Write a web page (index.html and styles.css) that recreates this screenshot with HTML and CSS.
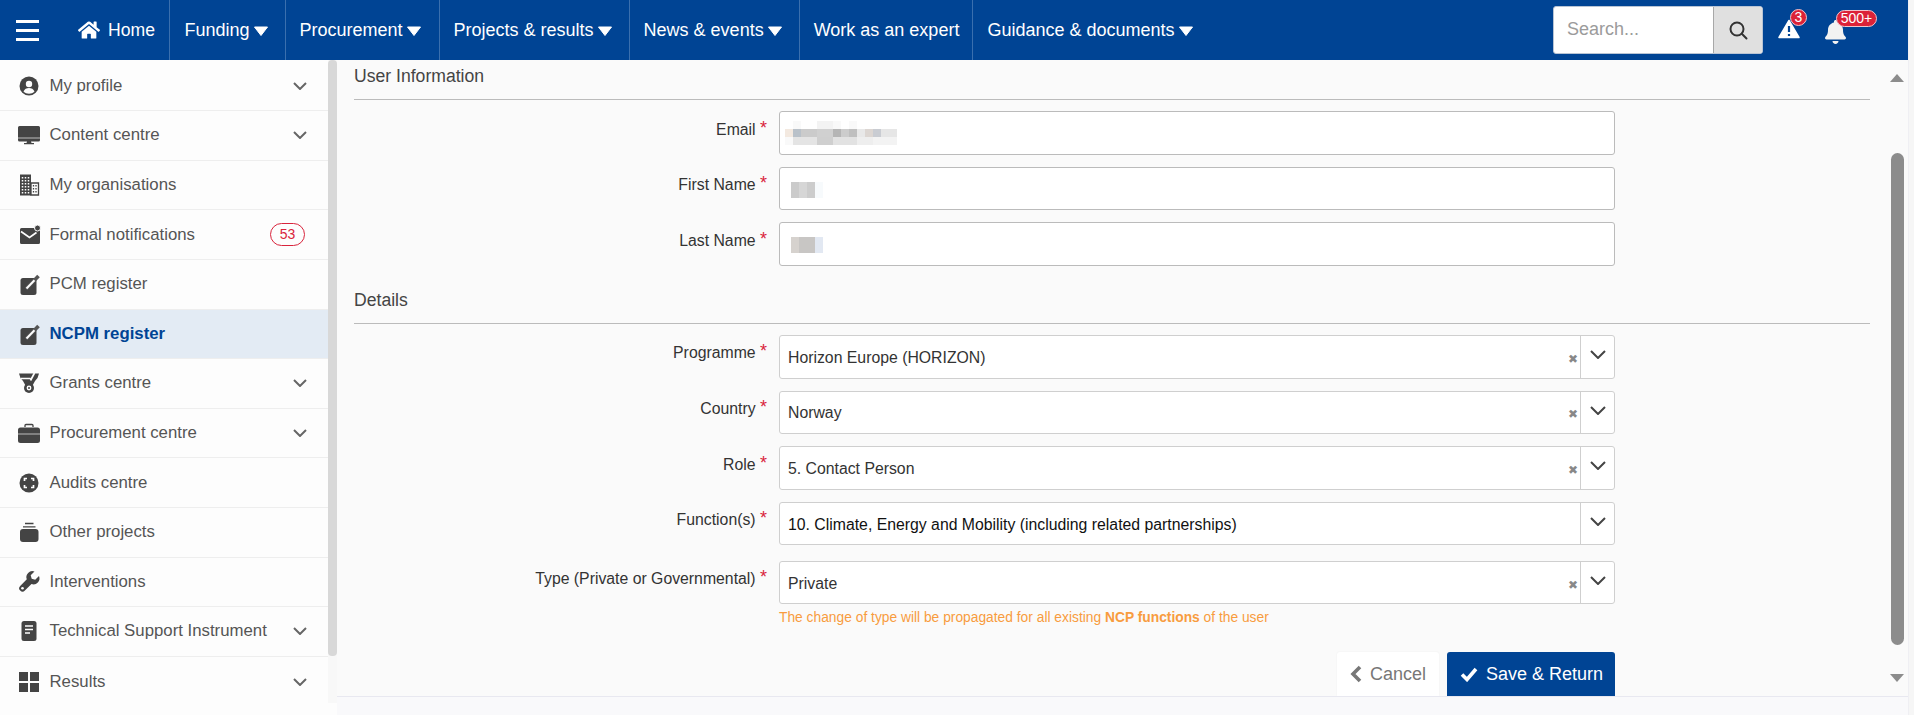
FILE: index.html
```html
<!DOCTYPE html>
<html lang="en">
<head>
<meta charset="utf-8">
<title>NCPM register</title>
<link rel="stylesheet" href="styles.css">
</head>
<body>
<div class="app">
  <header class="topbar">
    <button class="burger" aria-label="Menu"><span></span><span></span><span></span></button>
    <nav class="topnav">
      <a class="nav-item nav-home"><svg class="home-ico" viewBox="0 0 576 512"><path d="M280.37 148.26L96 300.11V464a16 16 0 0 0 16 16l112.06-.29a16 16 0 0 0 15.92-16V368a16 16 0 0 1 16-16h64a16 16 0 0 1 16 16v95.64a16 16 0 0 0 16 16.05L464 480a16 16 0 0 0 16-16V300L295.67 148.26a12.19 12.19 0 0 0-15.3 0zM571.6 251.47L488 182.56V44.05a12 12 0 0 0-12-12h-56a12 12 0 0 0-12 12v72.61L318.47 43a48 48 0 0 0-61 0L4.34 251.47a12 12 0 0 0-1.6 16.9l25.5 31A12 12 0 0 0 45.15 301l235.22-193.74a12.19 12.19 0 0 1 15.3 0L530.9 301a12 12 0 0 0 16.9-1.6l25.5-31a12 12 0 0 0-1.7-16.93z"/></svg>Home</a>
      <a class="nav-item">Funding<svg class="caret" viewBox="0 0 14 10"><path d="M.5 1h13L7 9.500z"/></svg></a>
      <a class="nav-item nav-wide">Procurement<svg class="caret" viewBox="0 0 14 10"><path d="M.5 1h13L7 9.500z"/></svg></a>
      <a class="nav-item">Projects &amp; results<svg class="caret" viewBox="0 0 14 10"><path d="M.5 1h13L7 9.500z"/></svg></a>
      <a class="nav-item">News &amp; events<svg class="caret" viewBox="0 0 14 10"><path d="M.5 1h13L7 9.500z"/></svg></a>
      <a class="nav-item nav-plain">Work as an expert</a>
      <a class="nav-item">Guidance &amp; documents<svg class="caret" viewBox="0 0 14 10"><path d="M.5 1h13L7 9.500z"/></svg></a>
    </nav>
    <div class="search">
      <span class="search-input">Search...</span>
      <span class="search-btn"><svg viewBox="0 0 20 20" class="search-ico"><circle cx="9" cy="9" r="6.500"/><path d="M13.800 13.800l4.700 4.700"/></svg></span>
    </div>
    <div class="alerts">
      <span class="alert-ico"><svg viewBox="0 0 22 20" class="warn"><path class="warn-bg" d="M11 1.500L21 18.500H1z"/><path class="warn-mark" d="M11 7v6M11 15v2"/></svg><b class="badge badge-round">3</b></span>
      <span class="bell-ico"><svg viewBox="0 0 448 512" class="bell"><path d="M224 512c35.32 0 63.97-28.65 63.97-64H160.03c0 35.35 28.65 64 63.97 64zm215.39-149.71c-19.32-20.76-55.47-51.99-55.47-154.29 0-77.7-54.48-139.9-127.94-155.16V32c0-17.67-14.32-32-31.98-32s-31.98 14.33-31.98 32v20.84C118.56 68.1 64.08 130.3 64.08 208c0 102.3-36.15 133.53-55.47 154.29-6 6.45-8.66 14.16-8.61 21.71.11 16.4 12.98 32 32.1 32h383.8c19.12 0 32-15.6 32.1-32 .05-7.55-2.61-15.27-8.61-21.71z"/></svg><b class="badge badge-pill">500+</b></span>
    </div>
  </header>
  <div class="body-row">
    <aside class="sidebar">
      <ul class="menu">
        <li class="menu-row"><svg class="ico" viewBox="0 0 24 24"><circle cx="12" cy="12" r="9.500"/><circle class="cut" cx="12" cy="10" r="3.200"/><path class="cut" d="M6.500 17.500c1-2.500 3-3.500 5.500-3.500s4.500 1 5.500 3.500c-1.500 1.500-3.300 2.200-5.500 2.200s-4-.7-5.500-2.200z"/></svg><span class="menu-text">My profile</span><svg class="chev" viewBox="0 0 14 8"><path d="M1 1l6 6 6-6"/></svg></li>
        <li class="menu-row"><svg class="ico" viewBox="0 0 24 24"><path d="M2.500 3h19A1.500 1.500 0 0 1 23 4.500V17a1.500 1.500 0 0 1-1.500 1.500h-19A1.500 1.500 0 0 1 1 17V4.500A1.500 1.500 0 0 1 2.500 3zM10 18.500h4l.5 1.500H17v1.200H7V20h2.500z"/><path class="cut-line" d="M1 15h22"/></svg><span class="menu-text">Content centre</span><svg class="chev" viewBox="0 0 14 8"><path d="M1 1l6 6 6-6"/></svg></li>
        <li class="menu-row"><svg class="ico" viewBox="0 0 24 24"><path d="M3 1.500h11v21H3z"/><path class="cut-dots" d="M5.500 4v17M8.500 4v17M11.500 4v17"/><path class="thin" d="M14 10h7.500v12H14z"/><path class="thin-dots" d="M16.500 12v9M19 12v9"/></svg><span class="menu-text">My organisations</span></li>
        <li class="menu-row"><svg class="ico" viewBox="0 0 24 24"><path d="M4.500 5h17A1.500 1.500 0 0 1 23 6.500V19.500A1.500 1.500 0 0 1 21.500 21H4.500A1.500 1.500 0 0 1 3 19.500V6.500A1.500 1.500 0 0 1 4.500 5z"/><path class="cut-stroke" d="M4 8.500l8.500 6 7-5"/><circle class="ring" cx="20.500" cy="5" r="3"/></svg><span class="menu-text">Formal notifications</span><span class="count">53</span></li>
        <li class="menu-row"><svg class="ico" viewBox="0 0 24 24"><rect x="3.500" y="6" width="16" height="17" rx="2.500"/><path class="pen-out" d="M9 17L21.500 4"/><path class="pen-in" d="M9.500 16.500l8-8.300"/></svg><span class="menu-text">PCM register</span></li>
        <li class="menu-row menu-row-active"><svg class="ico" viewBox="0 0 24 24"><rect x="3.500" y="6" width="16" height="17" rx="2.500"/><path class="pen-out" d="M9 17L21.500 4"/><path class="pen-in" d="M9.500 16.500l8-8.300"/></svg><span class="menu-text">NCPM register</span></li>
        <li class="menu-row"><svg class="ico" viewBox="0 0 24 24"><path d="M2 2.500h20l-1.500 4.500-2.500 3-3 5.500a5 5 0 0 1-6 0L6 10 3.500 7z"/><circle cx="12" cy="17" r="5"/><circle class="cut" cx="12" cy="17" r="2.400"/><circle cx="12" cy="17" r="1"/><path class="cut-stroke" d="M4 7.500h9.500M13.500 9.500L17.500 2"/></svg><span class="menu-text">Grants centre</span><svg class="chev" viewBox="0 0 14 8"><path d="M1 1l6 6 6-6"/></svg></li>
        <li class="menu-row"><svg class="ico" viewBox="0 0 24 24"><path d="M3.500 6.500h17A2.500 2.500 0 0 1 23 9v10.500a2.500 2.500 0 0 1-2.500 2.500h-17A2.500 2.500 0 0 1 1 19.500V9a2.500 2.500 0 0 1 2.500-2.500z"/><path class="thin" d="M8 6V4.500a1 1 0 0 1 1-1h6a1 1 0 0 1 1 1V6"/><path class="cut-line" d="M1 13h22"/></svg><span class="menu-text">Procurement centre</span><svg class="chev" viewBox="0 0 14 8"><path d="M1 1l6 6 6-6"/></svg></li>
        <li class="menu-row"><svg class="ico" viewBox="0 0 24 24"><circle cx="12" cy="12" r="9.500"/><path class="cut-stroke" d="M7.500 10V7.500H10M14 7.500h2.500V10M16.500 14v2.500H14M10 16.500H7.500V14"/></svg><span class="menu-text">Audits centre</span></li>
        <li class="menu-row"><svg class="ico" viewBox="0 0 24 24"><path d="M6 9h12.500a3 3 0 0 1 3 3v7a3 3 0 0 1-3 3H6a3 3 0 0 1-3-3v-7a3 3 0 0 1 3-3z"/><path class="thin" d="M6 6.800h12.500M8 3.500h8.500"/></svg><span class="menu-text">Other projects</span></li>
        <li class="menu-row"><svg class="ico" viewBox="0 0 24 24"><path d="M22 6l-3.800 3.800-3.500-1-1-3.500L17.500 1.500A6 6 0 0 0 9.800 9.300L3.200 15.900a3.300 3.300 0 1 0 4.700 4.700l6.600-6.600A6 6 0 0 0 22 6z"/><circle class="cut" cx="5.500" cy="18.300" r="1.300"/></svg><span class="menu-text">Interventions</span></li>
        <li class="menu-row"><svg class="ico" viewBox="0 0 24 24"><rect x="4.500" y="2" width="15" height="20" rx="2.500"/><path class="cut-stroke" d="M8 7h8M8 10.500h8M8 14h5"/></svg><span class="menu-text">Technical Support Instrument</span><svg class="chev" viewBox="0 0 14 8"><path d="M1 1l6 6 6-6"/></svg></li>
        <li class="menu-row"><svg class="ico" viewBox="0 0 24 24"><path d="M2 2h9v9H2zM13 2h9v9h-9zM2 13h9v9H2zM13 13h9v9h-9z"/></svg><span class="menu-text">Results</span><svg class="chev" viewBox="0 0 14 8"><path d="M1 1l6 6 6-6"/></svg></li>
      </ul>
      <div class="side-scroll"><div class="side-thumb"></div></div>
    </aside>
    <main class="main">
      <div class="main-row">
        <div class="content">
          <h2 class="section-head">User Information</h2>
          <div class="form-row">
            <label class="field-label">Email <i>*</i></label>
            <div class="field field-input"><svg class="mosaic mosaic-email" viewBox="0 0 112 24"><g fill="#f3f3f3"><rect x="8" width="8" height="8" fill="#f9f9f9"/><rect x="32" width="16" height="8"/><rect x="48" width="8" height="8" fill="#f9f9f9"/><rect x="64" width="8" height="8" fill="#f9f9f9"/></g><rect y="8" width="8" height="8" fill="#f3e9e0"/><rect x="8" y="8" width="8" height="8" fill="#b9c1c9"/><rect x="16" y="8" width="16" height="8" fill="#cbcbcb"/><rect x="32" y="8" width="16" height="8" fill="#d0d0d0"/><rect x="48" y="8" width="8" height="8" fill="#b5b5b5"/><rect x="56" y="8" width="8" height="8" fill="#cccccc"/><rect x="64" y="8" width="8" height="8" fill="#bfbfbf"/><rect x="72" y="8" width="8" height="8" fill="#e8e8e8"/><rect x="80" y="8" width="8" height="8" fill="#dcd6d2"/><rect x="88" y="8" width="8" height="8" fill="#c9ccd2"/><rect x="96" y="8" width="16" height="8" fill="#e6e6e6"/><rect y="16" width="8" height="8" fill="#f9f9f9"/><rect x="8" y="16" width="24" height="8" fill="#e4e4e4"/><rect x="32" y="16" width="16" height="8" fill="#cfcfcf"/><rect x="48" y="16" width="24" height="8" fill="#e2e2e2"/><rect x="72" y="16" width="16" height="8" fill="#eeeeee"/><rect x="88" y="16" width="24" height="8" fill="#f3f3f3"/></svg></div>
          </div>
          <div class="form-row">
            <label class="field-label">First Name <i>*</i></label>
            <div class="field field-input"><svg class="mosaic mosaic-name" viewBox="0 0 32 16"><rect width="8" height="16" fill="#cbcbcb"/><rect x="8" width="8" height="16" fill="#d6d6d6"/><rect x="16" width="8" height="16" fill="#cccccc"/><rect x="24" width="8" height="16" fill="#f7fafc"/></svg></div>
          </div>
          <div class="form-row">
            <label class="field-label">Last Name <i>*</i></label>
            <div class="field field-input"><svg class="mosaic mosaic-name" viewBox="0 0 32 16"><rect width="8" height="16" fill="#d6d2ce"/><rect x="8" width="16" height="16" fill="#c8c6c4"/><rect x="24" width="8" height="16" fill="#e2e8f2"/></svg></div>
          </div>
          <h2 class="section-head section-second">Details</h2>
          <div class="form-row">
            <label class="field-label">Programme <i>*</i></label>
            <div class="field field-select"><span class="value">Horizon Europe (HORIZON)</span><span class="clear">✖</span><span class="drop"><svg class="drop-chev" viewBox="0 0 16 9"><path d="M1 1l7 7 7-7"/></svg></span></div>
          </div>
          <div class="form-row">
            <label class="field-label">Country <i>*</i></label>
            <div class="field field-select"><span class="value">Norway</span><span class="clear">✖</span><span class="drop"><svg class="drop-chev" viewBox="0 0 16 9"><path d="M1 1l7 7 7-7"/></svg></span></div>
          </div>
          <div class="form-row">
            <label class="field-label">Role <i>*</i></label>
            <div class="field field-select"><span class="value">5. Contact Person</span><span class="clear">✖</span><span class="drop"><svg class="drop-chev" viewBox="0 0 16 9"><path d="M1 1l7 7 7-7"/></svg></span></div>
          </div>
          <div class="form-row">
            <label class="field-label">Function(s) <i>*</i></label>
            <div class="field field-select"><span class="value value-dark">10. Climate, Energy and Mobility (including related partnerships)</span><span class="drop"><svg class="drop-chev" viewBox="0 0 16 9"><path d="M1 1l7 7 7-7"/></svg></span></div>
          </div>
          <div class="form-row form-row-type">
            <label class="field-label">Type (Private or Governmental) <i>*</i></label>
            <div>
              <div class="field field-select"><span class="value">Private</span><span class="clear">✖</span><span class="drop"><svg class="drop-chev" viewBox="0 0 16 9"><path d="M1 1l7 7 7-7"/></svg></span></div>
              <p class="help">The change of type will be propagated for all existing <b>NCP functions</b> of the user</p>
            </div>
          </div>
          <div class="actions">
            <button class="btn btn-cancel"><svg class="btn-ico" viewBox="0 0 12 18"><path d="M10 2L3 9l7 7"/></svg>Cancel</button>
            <button class="btn btn-save"><svg class="btn-ico" viewBox="0 0 18 16"><path d="M2 8.500l5 5L16 3"/></svg>Save &amp; Return</button>
          </div>
        </div>
        <div class="main-scroll">
          <span class="arrow-up"></span>
          <span class="main-thumb"></span>
          <span class="arrow-down"></span>
        </div>
      </div>
      <div class="main-foot"></div>
    </main>
  </div>
</div>
<div class="edge"></div>
</body>
</html>
```
FILE: styles.css
```css
* { box-sizing: border-box; }
html, body { margin: 0; height: 715px; overflow: hidden; }
body {
  display: flex;
  background: #fdfdfd;
  font-family: "Liberation Sans", Arial, sans-serif;
  color: #333;
}
.app { width: 1908px; display: flex; flex-direction: column; height: 715px; }
.edge { width: 6px; background: #f6f6f6; border-left: 1px solid #efeff3; }

/* top bar */
.topbar { height: 60px; background: #004494; display: flex; align-items: center; color: #fff; flex: none; }
.burger {
  width: 64px; height: 60px; padding: 0 0 0 16px; border: 0; background: none;
  display: flex; flex-direction: column; justify-content: center; align-items: flex-start; gap: 6px;
}
.burger span { display: block; width: 23px; height: 3px; background: #fff; }
.topnav { display: flex; height: 60px; }
.nav-item {
  display: flex; align-items: center; padding: 0 17px 0 14px; font-size: 18px;
  border-left: 1px solid #3a6fae; color: #fff; white-space: nowrap;
}
.nav-home { border-left: 0; padding: 0 14.500px 0 14px; font-size: 17.600px; }
.nav-wide { padding-right: 18px; }
.nav-plain { padding-right: 13px; }
.home-ico { width: 22px; height: 20px; fill: #fff; margin-right: 8px; }
.caret { width: 14px; height: 10px; fill: #fff; stroke: #fff; stroke-width: 1; stroke-linejoin: round; margin-left: 4px; margin-top: 1px; }
.search {
  margin-left: auto; width: 210px; height: 48px; display: flex; border-radius: 3px;
  border: 1px solid #b8c4d4; background: #fff; overflow: hidden;
}
.search-input { flex: 1; padding-left: 13px; line-height: 44px; font-size: 18px; color: #9b9b9b; }
.search-btn { width: 49px; background: #e0e0e0; border-left: 1px solid #a8a8a8; display: flex; align-items: center; justify-content: center; }
.search-ico { width: 20px; height: 20px; fill: none; stroke: #333; stroke-width: 2; stroke-linecap: round; }
.alerts { width: 145px; height: 60px; display: flex; position: relative; }
.alert-ico, .bell-ico { position: absolute; display: block; }
.alert-ico { left: 15px; top: 19px; width: 22px; height: 20px; }
.bell-ico { left: 62px; top: 20px; width: 21px; height: 24px; }
.warn, .bell { display: block; width: 100%; height: 100%; }
.warn-bg { fill: #fff; stroke: #fff; stroke-width: 1.500; stroke-linejoin: round; }
.warn-mark { stroke: #004494; stroke-width: 2.200; fill: none; }
.bell { fill: #f2f2f2; }
.badge {
  position: absolute; background: #dc2238; color: #fff; font-weight: 400;
  border: 1px solid #f3c3ca; font-size: 14px; text-align: center; line-height: 15px; height: 17px;
}
.badge-round { width: 17px; border-radius: 50%; left: 12px; top: -10px; }
.badge-pill { width: 41px; border-radius: 9px; left: 11px; top: -10px; }

/* body */
.body-row { flex: 1; display: flex; min-height: 0; }
.sidebar { width: 337px; height: 643px; display: flex; overflow: hidden; flex: none; }
.menu { list-style: none; margin: 0; padding: 1.600px 0 0; width: 328px; background: #fdfdfd; }
.menu-row {
  height: 49.600px; display: flex; align-items: center; padding: 0 21px 0 17px;
  border-bottom: 1px solid #eeeeee; font-size: 16.800px; color: #555;
}
.menu-row:last-child { border-bottom: 0; }
.menu-row-active { background: #e3ebf4; color: #004494; font-weight: 700; }
.menu-text { margin-left: 8.500px; flex: 1; white-space: nowrap; }
.ico { width: 24px; height: 24px; fill: #444; flex: none; }
.ico .cut { fill: #fdfdfd; }
.ico .cut-line { stroke: #a8a8a8; stroke-width: 1.200; fill: none; }
.ico .cut-dots { stroke: #fdfdfd; stroke-width: 1.500; stroke-dasharray: 1.500 1.500; fill: none; }
.ico .cut-stroke { stroke: #fdfdfd; stroke-width: 1.700; fill: none; }
.ico .thin { stroke: #444; stroke-width: 1.300; fill: none; }
.ico .thin-dots { stroke: #444; stroke-width: 1.300; stroke-dasharray: 1.500 1.500; fill: none; }
.ico .ring { fill: #444; stroke: #fdfdfd; stroke-width: 1; }
.ico .pen-out { stroke: #555; stroke-width: 3.600; fill: none; }
.ico .pen-in { stroke: #fdfdfd; stroke-width: 2; fill: none; }
.chev { width: 14px; height: 8px; fill: none; stroke: #666; stroke-width: 2; flex: none; }
.count {
  width: 35px; height: 23px; margin-right: 2px; border: 1px solid #d9243c; border-radius: 12px;
  color: #d9243c; font-size: 14px; line-height: 20px; text-align: center;
}
.side-scroll { width: 9px; background: #f8f8f8; }
.side-thumb { height: 596px; background: #d8d8d8; border-radius: 4px; }

/* main */
.main { flex: 1; display: flex; flex-direction: column; min-width: 0; background: #fafafa; }
.main-row { flex: 1; display: flex; min-height: 0; }
.content { flex: 1; padding: 0 20px 0 17px; overflow: hidden; }
.section-head {
  margin: 0 0 11px; height: 40px; padding-top: 6px; font-size: 17.600px; font-weight: 400; line-height: 21px;
  color: #444; border-bottom: 1px solid #bbbbbb;
}
.section-second { margin-top: 18.200px; }
.form-row { display: grid; grid-template-columns: 413px 836px; column-gap: 12px; margin-bottom: 12px; }
.form-row-type { margin-top: 15.400px; margin-bottom: 0; }
.field-label { text-align: right; font-size: 15.800px; line-height: 20px; padding-top: 8.500px; color: #333; white-space: nowrap; }
.field-label i { color: #d9243c; font-style: normal; font-size: 18px; line-height: 16px; vertical-align: 1px; }
.field {
  height: 43.600px; background: #fff; border-radius: 3px; display: flex; align-items: center; font-size: 15.800px;
}
.field-input { border: 1px solid #bbbbbb; }
.field-select { border: 1px solid #cfcfcf; }
.mosaic { display: block; }
.mosaic-email { width: 112px; height: 24px; margin-left: 5px; }
.mosaic-name { width: 32px; height: 16px; margin-left: 11px; margin-top: 3px; }
.value { flex: 1; padding: 2px 0 0 8px; color: #333; white-space: nowrap; }
.value-dark { color: #111; }
.clear { font-size: 12px; color: #888; width: 12px; margin-top: 4px; margin-right: 1px; text-align: center; line-height: 12px; font-family: "DejaVu Sans", sans-serif; }
.drop { width: 34px; align-self: stretch; border-left: 1px solid #cfcfcf; display: flex; align-items: center; justify-content: center; }
.drop-chev { width: 16px; height: 9px; fill: none; stroke: #444; stroke-width: 2; margin-top: -4px; }
.help { margin: 5px 0 0; font-size: 13.800px; line-height: 18px; color: #f89c3e; }
.actions { display: flex; justify-content: flex-end; gap: 8px; width: 1261px; margin-top: 25px; }
.btn {
  height: 44px; border: 0; border-radius: 3px 3px 0 0; font: 18px "Liberation Sans", Arial, sans-serif;
  display: flex; align-items: center; padding: 0; flex: none;
}
.btn-cancel { width: 102px; background: #fff; color: #777; padding-left: 13px; box-shadow: 0 0 2px #eee; }
.btn-save { width: 168px; background: #004494; color: #fff; padding-left: 13px; }
.btn-ico { fill: none; stroke-width: 3.600; margin-right: 8px; flex: none; }
.btn-cancel .btn-ico { width: 12px; height: 18px; stroke: #777; }
.btn-save .btn-ico { width: 18px; height: 16px; stroke: #fff; }

/* main scrollbar */
.main-scroll { width: 18px; flex: none; display: flex; flex-direction: column; align-items: flex-start; }
.arrow-up, .arrow-down { width: 0; height: 0; border-left: 7.500px solid transparent; border-right: 7.500px solid transparent; }
.arrow-up { border-bottom: 8px solid #8c8c8c; margin-top: 14px; }
.arrow-down { border-top: 8px solid #8c8c8c; margin-top: 29px; }
.main-thumb { width: 13px; height: 492px; background: #8c8c8c; border-radius: 7px; margin: 71px 0 0 1px; }
.main-foot { height: 19px; flex: none; background: #f9f9fb; border-top: 1px solid #e8e8f0; }
```
